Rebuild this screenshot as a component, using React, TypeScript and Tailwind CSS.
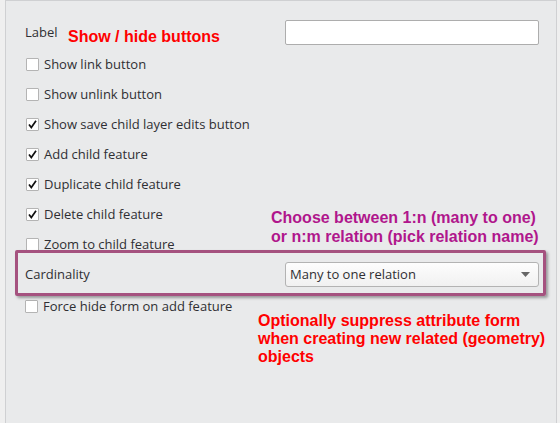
import React from "react";

const ui = { fontFamily: '"Open Sans", "Noto Sans", sans-serif' };
const ann = { fontFamily: '"Liberation Sans", Arial, sans-serif' };

function Box({ checked }: { checked?: boolean }) {
  return (
    <div className="w-[13px] h-[13px] bg-white border border-[#b4b4b4] rounded-[1px] flex items-center justify-center shrink-0">
      {checked && (
        <svg width="11" height="11" viewBox="0 0 11 11">
          <path d="M2 5.5 L4.3 8.6 L9 1.8" fill="none" stroke="#111" strokeWidth="1.7" />
        </svg>
      )}
    </div>
  );
}

function Row({ label, checked }: { label: string; checked?: boolean }) {
  return (
    <div className="h-[30px] flex items-center pl-[20px] gap-[5px]">
      <Box checked={checked} />
      <span className="text-[13px] text-[#2f2f33] leading-none">{label}</span>
    </div>
  );
}

export default function App() {
  return (
    <div className="w-[560px] h-[423px] flex bg-[#efefef] overflow-hidden" style={ui}>
      <div className="w-[5px] shrink-0 bg-[#efefef]" />
      <div className="relative w-[552px] h-full bg-[#e9eaeb] border-l border-r border-t border-[#cfd0d2] flex flex-col">
        <div className="h-[25px] mt-[19px] flex items-center pl-[19px]">
          <span className="text-[13px] text-[#2f2f33] w-[260px]">Label</span>
          <div className="w-[254px] h-[25px] bg-white border border-[#adadad] rounded-[2px]" />
        </div>
        <div className="h-[4px]" />
        <Row label="Show link button" />
        <Row label="Show unlink button" />
        <Row label="Show save child layer edits button" checked />
        <Row label="Add child feature" checked />
        <Row label="Duplicate child feature" checked />
        <Row label="Delete child feature" checked />
        <Row label="Zoom to child feature" />
        <div className="h-[31px] flex items-center pl-[19px]">
          <span className="text-[13px] text-[#2f2f33] w-[260px]">Cardinality</span>
          <div className="w-[254px] h-[25px] bg-gradient-to-b from-[#fdfdfd] to-[#f1f1f1] border border-[#b3b3b3] rounded-[3px] flex items-center pl-[4px] pr-[8px] justify-between">
            <span className="text-[13px] text-[#2f2f33]">Many to one relation</span>
            <svg width="9" height="5" viewBox="0 0 9 5">
              <path d="M0 0 H9 L4.5 5 Z" fill="#666" />
            </svg>
          </div>
        </div>
        <div className="h-[30px] mt-[1px] flex items-center pl-[19px] gap-[5px]">
          <Box />
          <span className="text-[13px] text-[#2f2f33] leading-none">Force hide form on add feature</span>
        </div>

        <div className="absolute left-[9px] top-[249px] w-[531px] h-[46px] border-[3px] border-[#a5527f] rounded-[2px] shadow-[2px_2px_3px_rgba(0,0,0,0.35)] pointer-events-none" />

        <div className="absolute left-[62px] top-[27px] text-[16px] font-bold text-[#ff0000] leading-[18px]" style={ann}>
          Show / hide buttons
        </div>
        <div className="absolute left-[265px] top-[207px] text-[16px] font-bold text-[#b0168c] leading-[19px]" style={ann}>
          Choose between 1:n (many to one)
          <br />
          or n:m relation (pick relation name)
        </div>
        <div className="absolute left-[252px] top-[311px] text-[16px] font-bold text-[#ff0000] leading-[18px]" style={ann}>
          Optionally suppress attribute form
          <br />
          when creating new related (geometry)
          <br />
          objects
        </div>
      </div>
    </div>
  );
}
